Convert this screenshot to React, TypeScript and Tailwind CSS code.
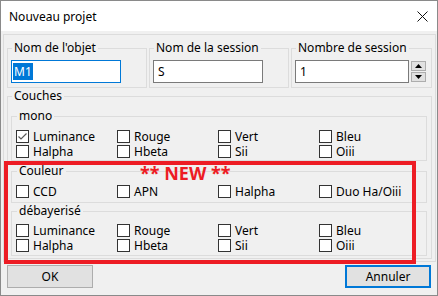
import React from "react";

function Box({ checked }: { checked?: boolean }) {
  return (
    <span className="w-[13px] h-[13px] border border-[#333333] bg-white flex items-center justify-center shrink-0">
      {checked && (
        <svg width="11" height="11" viewBox="0 0 11 11">
          <polyline points="1.5,5.5 4,8 9.5,2.5" fill="none" stroke="#5a5a5a" strokeWidth="1.2" />
        </svg>
      )}
    </span>
  );
}

function Check({ label, checked, last }: { label: string; checked?: boolean; last?: boolean }) {
  return (
    <div className={"flex items-center h-[15px] " + (last ? "" : "w-[101px]")}>
      <Box checked={checked} />
      <span className="ml-[4px] leading-[14px] whitespace-nowrap">{label}</span>
    </div>
  );
}

function Row({ items, checkedFirst }: { items: string[]; checkedFirst?: boolean }) {
  return (
    <div className="flex pl-[1px]">
      {items.map((it, i) => (
        <Check key={it} label={it} checked={checkedFirst && i === 0} last={i === items.length - 1} />
      ))}
    </div>
  );
}

export default function App() {
  return (
    <div className="w-[438px] h-[296px] bg-[#f0f0f0] border border-[#8a8a8a] flex flex-col relative font-['Noto_Sans',sans-serif] text-[12px] text-black overflow-hidden">
      {/* title bar */}
      <div className="h-[30px] bg-white flex items-center justify-between pl-[8px] pr-[9px] shrink-0">
        <span className="leading-[16px] mt-[1px]">Nouveau projet</span>
        <svg width="11" height="11" viewBox="0 0 11 11" className="mt-[1px]">
          <path d="M0.5 0.5 L10.5 10.5 M10.5 0.5 L0.5 10.5" stroke="#111" strokeWidth="1" />
        </svg>
      </div>

      {/* panel */}
      <div className="ml-[2px] mt-[3px] w-[433px] h-[228px] border border-[#dcdcdc] pl-[3px] pt-[5px] shrink-0">
        <div className="w-[425px] grid grid-cols-[140px_140px_141px] gap-[2px]">
          <fieldset className="border border-[#dcdcdc] px-[3px] pb-[4px]">
            <legend className="ml-[1px] px-[2px] leading-[16px]">Nom de l'objet</legend>
            <div className="mt-[4px] w-[110px] h-[23px] border border-[#0078d7] bg-white flex items-center pl-[1px]">
              <span className="bg-[#0078d7] text-white px-[1px] leading-[17px]">M1</span>
            </div>
          </fieldset>
          <fieldset className="border border-[#dcdcdc] px-[3px] pb-[4px]">
            <legend className="ml-[1px] px-[2px] leading-[16px]">Nom de la session</legend>
            <div className="mt-[4px] w-[110px] h-[23px] border border-[#7a7a7a] bg-white flex items-center pl-[4px]">
              <span className="leading-[17px]">S</span>
            </div>
          </fieldset>
          <fieldset className="border border-[#dcdcdc] px-[3px] pb-[4px]">
            <legend className="ml-[1px] px-[2px] leading-[16px]">Nombre de session</legend>
            <div className="mt-[4px] flex">
              <div className="w-[114px] h-[23px] border border-[#7a7a7a] bg-white flex items-center pl-[4px]">
                <span className="leading-[17px]">1</span>
              </div>
              <div className="ml-[2px] mt-[1px] flex flex-col gap-[1px]">
                <div className="w-[15px] h-[10px] border border-[#adadad] bg-[#e1e1e1] flex items-center justify-center">
                  <svg width="7" height="4" viewBox="0 0 7 4">
                    <polygon points="3.5,0 7,4 0,4" fill="#000" />
                  </svg>
                </div>
                <div className="w-[15px] h-[10px] border border-[#adadad] bg-[#e1e1e1] flex items-center justify-center">
                  <svg width="7" height="4" viewBox="0 0 7 4">
                    <polygon points="0,0 7,0 3.5,4" fill="#000" />
                  </svg>
                </div>
              </div>
            </div>
          </fieldset>
        </div>

        <fieldset className="w-[425px] border border-[#dcdcdc] pl-[3px] pr-[4px] pb-[2px]">
          <legend className="ml-[1px] px-[2px] leading-[16px]">Couches</legend>

          <fieldset className="mt-[4px] w-[416px] border border-[#dcdcdc] px-[3px] pb-[1px]">
            <legend className="ml-[2px] px-[2px] leading-[16px]">mono</legend>
            <div className="mt-[5px]">
              <Row items={["Luminance", "Rouge", "Vert", "Bleu"]} checkedFirst />
              <Row items={["Halpha", "Hbeta", "Sii", "Oiii"]} />
            </div>
          </fieldset>

          <fieldset className="mt-[2px] w-[416px] border border-[#dcdcdc] px-[3px] pb-[3px]">
            <legend className="ml-[2px] px-[2px] leading-[16px]">Couleur</legend>
            <div className="mt-[5px]">
              <Row items={["CCD", "APN", "Halpha", "Duo Ha/Oiii"]} />
            </div>
          </fieldset>

          <fieldset className="w-[416px] border border-[#dcdcdc] px-[3px] pb-[2px]">
            <legend className="ml-[2px] px-[2px] leading-[16px]">débayerisé</legend>
            <div className="mt-[4px]">
              <Row items={["Luminance", "Rouge", "Vert", "Bleu"]} />
              <Row items={["Halpha", "Hbeta", "Sii", "Oiii"]} />
            </div>
          </fieldset>
        </fieldset>
      </div>

      {/* buttons */}
      <div className="mt-[3px] flex justify-between pl-[6px] pr-[6px]">
        <button className="w-[86px] h-[23px] border border-[#adadad] bg-[#e1e1e1] leading-[16px]">OK</button>
        <button className="w-[86px] h-[23px] border-2 border-[#0078d7] bg-[#e1e1e1] leading-[16px]">Annuler</button>
      </div>

      {/* red annotation overlay */}
      <div className="absolute left-[3px] top-[160px] w-[412px] h-[103px] border-4 border-[#ed1c24] pointer-events-none" />
      <div className="absolute left-[139px] top-[163px] text-[18px] leading-[18px] font-bold text-[#ed1c24] whitespace-nowrap">
        ** NEW **
      </div>
    </div>
  );
}
